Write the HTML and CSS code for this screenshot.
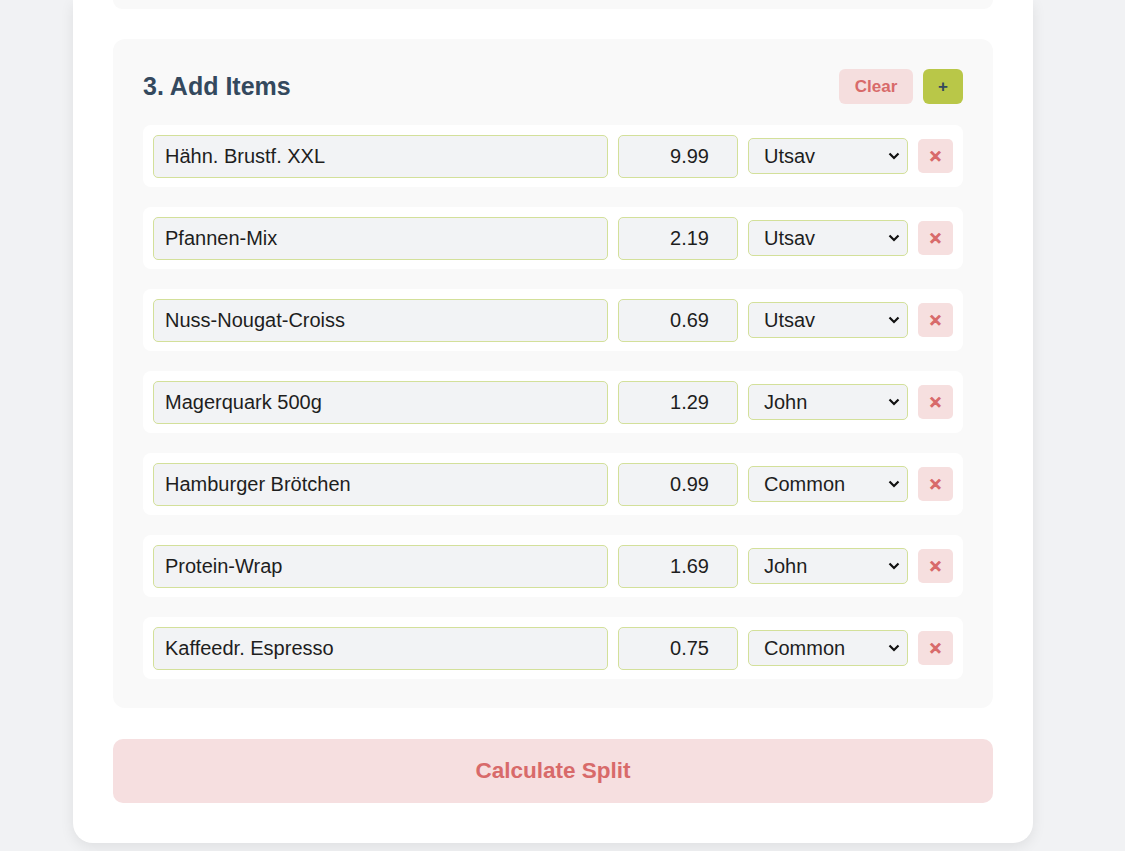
FILE: index.html
```html
<!DOCTYPE html>
<html lang="en">
<head>
<meta charset="utf-8">
<title>Bill Splitter</title>
<link rel="stylesheet" href="styles.css">
</head>
<body>
<main class="card">
  <div class="prev-section"></div>
  <section class="section">
    <div class="section-head">
      <h2 class="section-title">3. Add Items</h2>
      <div class="head-actions">
        <button class="btn btn-clear" type="button">Clear</button>
        <button class="btn btn-add" type="button">+</button>
      </div>
    </div>
    <div class="items">
      <div class="item-row">
        <input class="field name" type="text" value="Hähn. Brustf. XXL">
        <input class="field price" type="text" value="9.99">
        <select class="field owner"><option selected>Utsav</option><option>John</option><option>Common</option></select>
        <button class="btn-remove" type="button">✕</button>
      </div>
      <div class="item-row">
        <input class="field name" type="text" value="Pfannen-Mix">
        <input class="field price" type="text" value="2.19">
        <select class="field owner"><option selected>Utsav</option><option>John</option><option>Common</option></select>
        <button class="btn-remove" type="button">✕</button>
      </div>
      <div class="item-row">
        <input class="field name" type="text" value="Nuss-Nougat-Croiss">
        <input class="field price" type="text" value="0.69">
        <select class="field owner"><option selected>Utsav</option><option>John</option><option>Common</option></select>
        <button class="btn-remove" type="button">✕</button>
      </div>
      <div class="item-row">
        <input class="field name" type="text" value="Magerquark 500g">
        <input class="field price" type="text" value="1.29">
        <select class="field owner"><option>Utsav</option><option selected>John</option><option>Common</option></select>
        <button class="btn-remove" type="button">✕</button>
      </div>
      <div class="item-row">
        <input class="field name" type="text" value="Hamburger Brötchen">
        <input class="field price" type="text" value="0.99">
        <select class="field owner"><option>Utsav</option><option>John</option><option selected>Common</option></select>
        <button class="btn-remove" type="button">✕</button>
      </div>
      <div class="item-row">
        <input class="field name" type="text" value="Protein-Wrap">
        <input class="field price" type="text" value="1.69">
        <select class="field owner"><option>Utsav</option><option selected>John</option><option>Common</option></select>
        <button class="btn-remove" type="button">✕</button>
      </div>
      <div class="item-row">
        <input class="field name" type="text" value="Kaffeedr. Espresso">
        <input class="field price" type="text" value="0.75">
        <select class="field owner"><option>Utsav</option><option>John</option><option selected>Common</option></select>
        <button class="btn-remove" type="button">✕</button>
      </div>
    </div>
  </section>
  <button class="btn-calc" type="button">Calculate Split</button>
</main>
</body>
</html>
```
FILE: styles.css
```css
* { box-sizing: border-box; }

html, body {
  margin: 0;
  padding: 0;
}

body {
  background: #f1f2f4;
  font-family: "Liberation Sans", Arial, sans-serif;
  color: #1e1e1e;
  height: 851px;
  overflow: hidden;
}

.card {
  width: 960px;
  margin-left: 73px;
  background: #ffffff;
  border-radius: 0 0 20px 20px;
  padding: 0 40px 40px;
  box-shadow: 0 4px 14px rgba(0, 0, 0, 0.08);
  display: flex;
  flex-direction: column;
  gap: 30px;
}

.prev-section {
  height: 9px;
  background: #f9f9f9;
  border-radius: 0 0 12px 12px;
}

.section {
  background: #f9f9f9;
  border-radius: 12px;
  padding: 30px 30px 29px;
  display: flex;
  flex-direction: column;
  gap: 21px;
}

.section-head {
  display: flex;
  align-items: center;
  justify-content: space-between;
  height: 35px;
}

.section-title {
  margin: 0;
  font-size: 25px;
  font-weight: 700;
  color: #34495e;
}

.head-actions {
  display: flex;
  gap: 10px;
}

.btn {
  border: none;
  border-radius: 6px;
  font-family: inherit;
  font-weight: 700;
  font-size: 17px;
  height: 35px;
  cursor: pointer;
}

.btn-clear {
  width: 74px;
  background: #f5dede;
  color: #d86a6a;
}

.btn-add {
  width: 40px;
  background: #b9c748;
  color: #34495e;
}

.items {
  display: flex;
  flex-direction: column;
  gap: 20px;
}

.item-row {
  background: #ffffff;
  border-radius: 8px;
  padding: 9px 10px;
  height: 62px;
  display: flex;
  align-items: center;
  gap: 10px;
}

.field {
  font-family: inherit;
  font-size: 20px;
  color: #1e1e1e;
  background-color: #f2f3f5;
  border: 1.5px solid #d3e09a;
  border-radius: 5px;
}

.name {
  width: 455px;
  height: 43px;
  padding: 0 11px;
}

.price {
  width: 120px;
  height: 43px;
  padding: 0 28px 0 10px;
  text-align: right;
}

.owner {
  width: 160px;
  height: 36px;
  padding: 0 28px 0 15px;
  appearance: none;
  -webkit-appearance: none;
  background-image: url("data:image/svg+xml;utf8,<svg xmlns='http://www.w3.org/2000/svg' width='12' height='8' viewBox='0 0 12 8'><path d='M1.5 1.5 L6 6 L10.5 1.5' fill='none' stroke='%23111' stroke-width='2.2'/></svg>");
  background-repeat: no-repeat;
  background-position: right 7px center;
  background-size: 12px 8px;
}

.btn-remove {
  width: 35px;
  height: 34px;
  border: none;
  border-radius: 5px;
  background: #f6dfdf;
  color: #d86a6a;
  font-family: "DejaVu Sans", sans-serif;
  font-weight: 700;
  font-size: 16px;
  -webkit-text-stroke: 1.2px #d86a6a;
  padding: 0;
  cursor: pointer;
}

.btn-calc {
  height: 64px;
  margin-top: 1px;
  border: none;
  border-radius: 10px;
  background: #f6dfe0;
  color: #d86a6a;
  font-family: inherit;
  font-weight: 700;
  font-size: 22.5px;
  cursor: pointer;
}
```
